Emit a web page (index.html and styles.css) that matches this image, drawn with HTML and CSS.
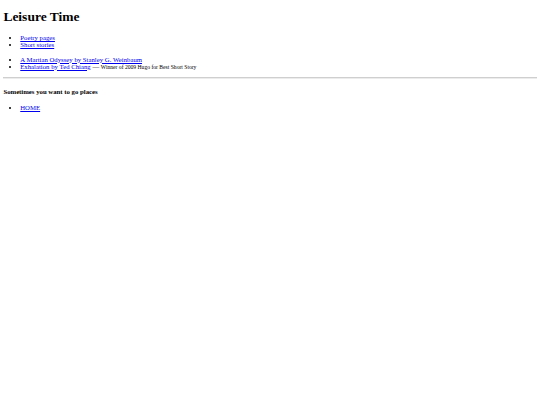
FILE: index.html
```html
<!DOCTYPE html>
<html>
<head>
<meta charset="utf-8">
<title>Leisure Time</title>
<link rel="stylesheet" href="styles.css">
</head>
<body class="page">
<h1 class="title">Leisure Time</h1>
<ul class="list">
<li><a href="#">Poetry pages</a></li>
<li><a href="#">Short stories</a></li>
</ul>
<ul class="list">
<li><a href="#">A Martian Odyssey by Stanley G. Weinbaum</a></li>
<li><a href="#">Exhalation by Ted Chiang</a> — <small class="note">Winner of 2009 Hugo for Best Short Story</small></li>
</ul>
<hr class="rule">
<h4 class="subtitle">Sometimes you want to go places</h4>
<ul class="list">
<li><a href="#">HOME</a></li>
</ul>
</body>
</html>
```
FILE: styles.css
```css
html {
  background: #fff;
}
.page {
  margin: 3.375px;
  font-family: "Liberation Serif", serif;
  font-size: 6.75px;
  color: #000;
}
.title {
  font-size: 13.5px;
  margin: 6px 0 9px;
  font-weight: bold;
}
.list {
  margin: 7.3px 0;
  padding-left: 16.875px;
  list-style: disc;
}
.list a {
  color: #0000ee;
  text-decoration: underline;
}
.note {
  font-size: 5.625px;
}
.rule {
  margin: 3.375px 0;
  height: 0;
  border: 0;
  border-top: 1px solid #cfcfcf;
  border-bottom: 1px solid #ececec;
}
.subtitle {
  margin: 9px 0;
  font-size: 6.75px;
  font-weight: bold;
}
```
